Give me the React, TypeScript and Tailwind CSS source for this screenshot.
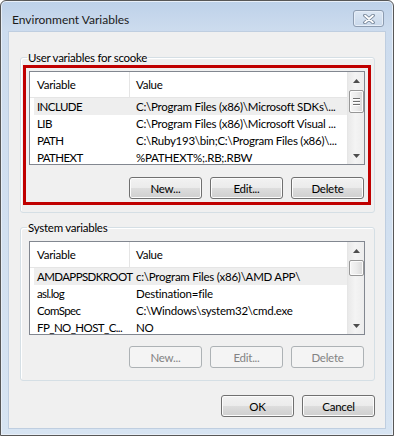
import React from "react";

type Row = { name: string; value: string; selected?: boolean };

const userRows: Row[] = [
  { name: "INCLUDE", value: "C:\\Program Files (x86)\\Microsoft SDKs\\...", selected: true },
  { name: "LIB", value: "C:\\Program Files (x86)\\Microsoft Visual ..." },
  { name: "PATH", value: "C:\\Ruby193\\bin;C:\\Program Files (x86)\\..." },
  { name: "PATHEXT", value: "%PATHEXT%;.RB;.RBW" },
];

const systemRows: Row[] = [
  { name: "AMDAPPSDKROOT", value: "c:\\Program Files (x86)\\AMD APP\\", selected: true },
  { name: "asl.log", value: "Destination=file" },
  { name: "ComSpec", value: "C:\\Windows\\system32\\cmd.exe" },
  { name: "FP_NO_HOST_C...", value: "NO" },
];

function Arrow({ down }: { down?: boolean }) {
  return (
    <svg width="7" height="4" viewBox="0 0 7 4">
      <polygon points={down ? "0,0 7,0 3.5,4" : "3.5,0 7,4 0,4"} fill="#4d4d4d" />
    </svg>
  );
}

function Scrollbar({ thumbH, grip }: { thumbH: number; grip?: boolean }) {
  return (
    <div className="flex w-[17px] shrink-0 flex-col items-center border-l border-[#e6e6e6] bg-[linear-gradient(to_right,#e9e9e9,#f4f4f4_45%,#ededed)]">
      <div className="flex h-[17px] w-full items-center justify-center">
        <Arrow />
      </div>
      <div
        className="mt-[1px] flex w-[15px] flex-col items-center justify-center gap-[2px] rounded-[2px] border border-[#979797] bg-[linear-gradient(to_right,#f6f6f6,#ebebeb_50%,#d9d9d9)] shadow-[inset_0_0_0_1px_#fbfbfb]"
        style={{ height: thumbH }}
      >
        {grip && (
          <>
            <div className="h-[1px] w-[7px] bg-[#6e6e6e] shadow-[0_1px_0_#ffffff]" />
            <div className="h-[1px] w-[7px] bg-[#6e6e6e] shadow-[0_1px_0_#ffffff]" />
            <div className="h-[1px] w-[7px] bg-[#6e6e6e] shadow-[0_1px_0_#ffffff]" />
          </>
        )}
      </div>
      <div className="flex-1" />
      <div className="flex h-[17px] w-full items-center justify-center">
        <Arrow down />
      </div>
    </div>
  );
}

function ListView({ rows, thumbH, grip }: { rows: Row[]; thumbH: number; grip?: boolean }) {
  return (
    <div className="flex h-[94px] w-[336px] overflow-hidden border border-[#828790] bg-white">
      <div className="flex min-w-0 flex-1 flex-col overflow-hidden">
        <div className="flex h-[26px] shrink-0 border-b border-[#e5e5e5]">
          <div className="flex w-[100px] items-center border-r border-[#e5e5e5] pl-[7px]">Variable</div>
          <div className="flex items-center pl-[6px]">Value</div>
        </div>
        {rows.map((r) => (
          <div
            key={r.name}
            className={
              r.selected
                ? "ml-[4px] flex h-[17px] shrink-0 items-center bg-[#eeeeee]"
                : "ml-[4px] flex h-[17px] shrink-0 items-center"
            }
          >
            <div className="w-[96px] shrink-0 whitespace-nowrap pl-[3px] tracking-[-0.6px]">{r.name}</div>
            <div className="whitespace-nowrap pl-[6px]">{r.value}</div>
          </div>
        ))}
      </div>
      <Scrollbar thumbH={thumbH} grip={grip} />
    </div>
  );
}

function Btn({ label, disabled }: { label: string; disabled?: boolean }) {
  return (
    <button
      className={
        disabled
          ? "flex h-[22px] w-[73px] items-center justify-center rounded-[3px] border border-[#adb2b5] bg-[#f4f4f4] text-[#838383]"
          : "flex h-[22px] w-[73px] items-center justify-center rounded-[3px] border border-[#707070] bg-[linear-gradient(to_bottom,#f2f2f2_0%,#ebebeb_50%,#dddddd_50%,#cfcfcf_100%)] text-black shadow-[inset_0_0_0_1px_#fcfcfc]"
      }
    >
      {label}
    </button>
  );
}

function CloseGlyph() {
  return (
    <svg width="14" height="10" viewBox="0 0 14 10">
      <path d="M3 1.5 L11 8.5 M11 1.5 L3 8.5" stroke="#6f7f93" strokeWidth="3.6" strokeLinecap="round" />
      <path d="M3 1.5 L11 8.5 M11 1.5 L3 8.5" stroke="#ffffff" strokeWidth="1.8" strokeLinecap="round" />
    </svg>
  );
}

export default function App() {
  return (
    <div className="flex h-[436px] w-[394px] flex-col rounded-t-[6px] border border-[#575757] bg-[linear-gradient(to_bottom,#bdd1e9_0px,#cddcee_30px,#d7e4f2_100%)] font-['Lato',sans-serif] text-[11.5px] leading-[15px] tracking-[-0.25px] text-black shadow-[inset_0_0_0_1px_#e8eff8]">
      {/* title bar */}
      <div className="flex h-[30px] shrink-0 items-start justify-between pl-[11px] pr-[9px]">
        <span className="mt-[11px] text-[12px] tracking-normal text-[#1b1b1b]">Environment Variables</span>
        <div className="mt-[9px] flex h-[17px] w-[31px] items-center justify-center rounded-[3px] border border-[#8d9cb0] bg-[linear-gradient(to_bottom,#dce7f4,#c9d8ea)] shadow-[inset_0_0_0_1px_#e6eef8]">
          <CloseGlyph />
        </div>
      </div>

      {/* client area */}
      <div className="ml-[7px] flex h-[398px] w-[378px] shrink-0 flex-col border border-[#bfcee0] bg-[#f0f0f0]">
        <fieldset className="ml-[11px] mt-[18px] w-[355px] rounded-[3px] border border-[#d5dfe5] p-0 shadow-[inset_1px_1px_0_#ffffff]">
          <legend className="ml-[6px] px-[1px] leading-[15px]">User variables for scooke</legend>
          <div className="pb-[7px] pl-[2px] pr-[3px]">
            <div className="flex w-[348px] flex-col border-[3px] border-[#c00000] p-[3px]">
              <ListView rows={userRows} thumbH={23} grip />
              <div className="mt-[12px] flex justify-end gap-[8px] pr-[1px]">
                <Btn label="New..." />
                <Btn label="Edit..." />
                <Btn label="Delete" />
              </div>
            </div>
          </div>
        </fieldset>

        <fieldset className="ml-[11px] mt-[7px] w-[355px] rounded-[3px] border border-[#d5dfe5] p-0 shadow-[inset_1px_1px_0_#ffffff]">
          <legend className="ml-[6px] px-[1px] leading-[15px]">System variables</legend>
          <div className="pb-[12px] pl-[8px] pr-[9px] pt-[6px]">
            <ListView rows={systemRows} thumbH={16} />
            <div className="mt-[11px] flex justify-end gap-[8px] pr-[1px]">
              <Btn label="New..." disabled />
              <Btn label="Edit..." disabled />
              <Btn label="Delete" disabled />
            </div>
          </div>
        </fieldset>

        <div className="mt-[14px] flex justify-end gap-[8px] pr-[10px]">
          <Btn label="OK" />
          <Btn label="Cancel" />
        </div>
      </div>
    </div>
  );
}
